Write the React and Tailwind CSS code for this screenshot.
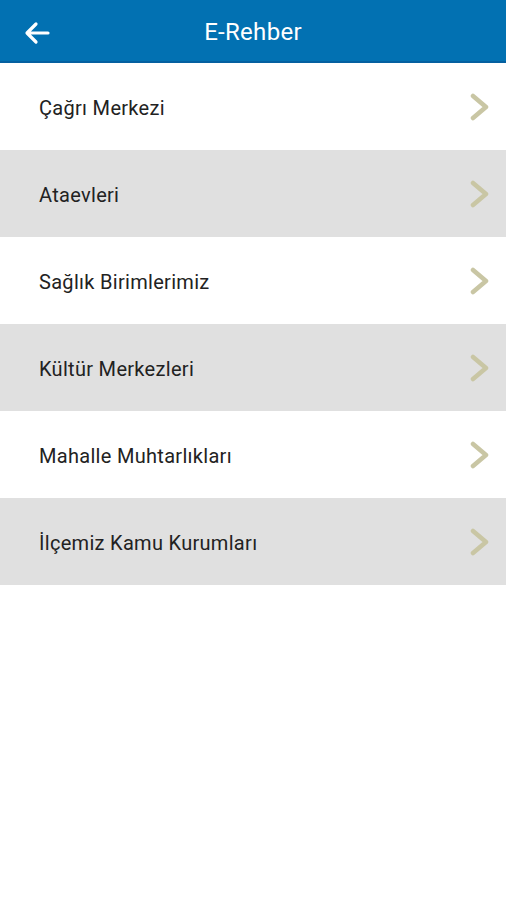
const items = [
  'Çağrı Merkezi',
  'Ataevleri',
  'Sağlık Birimlerimiz',
  'Kültür Merkezleri',
  'Mahalle Muhtarlıkları',
  'İlçemiz Kamu Kurumları',
];

function Chevron() {
  return (
    <svg width="22" height="28" viewBox="0 0 22 28" fill="none">
      <path d="M4 3 L17 14 L4 25" stroke="#c9c6a4" strokeWidth="4.5" strokeLinecap="round" strokeLinejoin="round" />
    </svg>
  );
}

export default function App() {
  return (
    <div className="min-h-[900px] bg-white font-['Roboto',sans-serif]">
      <header className="h-[63px] bg-[#0271b2] border-b-2 border-[#0560a0] relative flex items-center justify-center">
        <button className="absolute left-[22px] top-[19px] text-white">
          <svg width="30" height="28" viewBox="0 0 30 28" fill="none">
            <path d="M26 14 H6 M14 5 L5 14 L14 23" stroke="white" strokeWidth="3.2" strokeLinecap="round" strokeLinejoin="round" />
          </svg>
        </button>
        <h1 className="text-white text-[24px] font-normal pt-[3px] tracking-[0.3px]">E-Rehber</h1>
      </header>
      <ul>
        {items.map((name, i) => (
          <li
            key={name}
            className={`h-[87px] flex items-center justify-between pl-[39px] pr-[15px] ${i % 2 === 1 ? 'bg-[#e0e0e0]' : 'bg-white'}`}
          >
            <span className="text-[20px] tracking-[0.3px] text-[#222222] pt-[2px]">{name}</span>
            <Chevron />
          </li>
        ))}
      </ul>
    </div>
  );
}
